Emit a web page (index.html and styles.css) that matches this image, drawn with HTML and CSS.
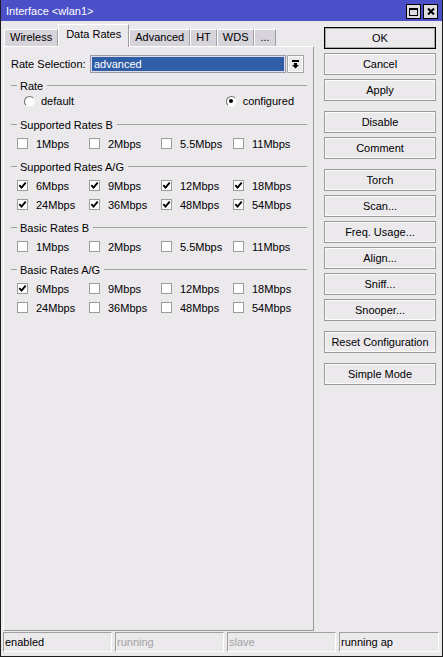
FILE: index.html
```html
<!DOCTYPE html>
<html>
<head>
<meta charset="utf-8">
<title>Interface &lt;wlan1&gt;</title>
<link rel="stylesheet" href="styles.css">
</head>
<body>
<div class="window">
  <div class="titlebar">
    <span class="title">Interface &lt;wlan1&gt;</span>
    <div class="title-btns">
      <span class="tbtn"><svg width="9" height="8" viewBox="0 0 9 8"><rect x="0" y="0" width="9" height="2" fill="#000"/><rect x="0.5" y="0.5" width="8" height="7" fill="none" stroke="#000"/></svg></span>
      <span class="tbtn"><svg width="8" height="7" viewBox="0 0 8 7"><path d="M1 0.5 L7 6.5 M7 0.5 L1 6.5" stroke="#000" stroke-width="2" fill="none"/></svg></span>
    </div>
  </div>
  <div class="main">
    <div class="left">
      <div class="tabs">
        <div class="tab">Wireless</div>
        <div class="tab active">Data Rates</div>
        <div class="tab">Advanced</div>
        <div class="tab">HT</div>
        <div class="tab">WDS</div>
        <div class="tab">...</div>
      </div>
      <div class="panel">
        <div class="sel-row">
          <span class="sel-label">Rate Selection:</span>
          <span class="combo">advanced</span>
          <span class="drop"><svg width="7" height="9" viewBox="0 0 7 9"><rect x="0" y="0" width="7" height="2" fill="#000"/><rect x="2" y="3" width="3" height="2" fill="#000"/><polygon points="0,5 7,5 3.5,8.5" fill="#000"/></svg></span>
        </div>

        <div class="group group-rate">
          <div class="ghead"><span class="dash"></span><span class="glabel">Rate</span><span class="gline"></span></div>
          <div class="radio-row">
            <span class="ritem"><span class="radio"></span>default</span>
            <span class="ritem ritem-right"><span class="radio on"></span>configured</span>
          </div>
        </div>

        <div class="group">
          <div class="ghead"><span class="dash"></span><span class="glabel">Supported Rates B</span><span class="gline"></span></div>
          <div class="row">
            <span class="cell"><span class="cb"></span>1Mbps</span>
            <span class="cell"><span class="cb"></span>2Mbps</span>
            <span class="cell"><span class="cb"></span>5.5Mbps</span>
            <span class="cell"><span class="cb"></span>11Mbps</span>
          </div>
        </div>

        <div class="group">
          <div class="ghead"><span class="dash"></span><span class="glabel">Supported Rates A/G</span><span class="gline"></span></div>
          <div class="row">
            <span class="cell"><span class="cb"><svg class="tick" viewBox="0 0 9 9"><path d="M1.3 4.2 L3.5 6.6 L7.7 1.6" /></svg></span>6Mbps</span>
            <span class="cell"><span class="cb"><svg class="tick" viewBox="0 0 9 9"><path d="M1.3 4.2 L3.5 6.6 L7.7 1.6" /></svg></span>9Mbps</span>
            <span class="cell"><span class="cb"><svg class="tick" viewBox="0 0 9 9"><path d="M1.3 4.2 L3.5 6.6 L7.7 1.6" /></svg></span>12Mbps</span>
            <span class="cell"><span class="cb"><svg class="tick" viewBox="0 0 9 9"><path d="M1.3 4.2 L3.5 6.6 L7.7 1.6" /></svg></span>18Mbps</span>
          </div>
          <div class="row">
            <span class="cell"><span class="cb"><svg class="tick" viewBox="0 0 9 9"><path d="M1.3 4.2 L3.5 6.6 L7.7 1.6" /></svg></span>24Mbps</span>
            <span class="cell"><span class="cb"><svg class="tick" viewBox="0 0 9 9"><path d="M1.3 4.2 L3.5 6.6 L7.7 1.6" /></svg></span>36Mbps</span>
            <span class="cell"><span class="cb"><svg class="tick" viewBox="0 0 9 9"><path d="M1.3 4.2 L3.5 6.6 L7.7 1.6" /></svg></span>48Mbps</span>
            <span class="cell"><span class="cb"><svg class="tick" viewBox="0 0 9 9"><path d="M1.3 4.2 L3.5 6.6 L7.7 1.6" /></svg></span>54Mbps</span>
          </div>
        </div>

        <div class="group">
          <div class="ghead"><span class="dash"></span><span class="glabel">Basic Rates B</span><span class="gline"></span></div>
          <div class="row">
            <span class="cell"><span class="cb"></span>1Mbps</span>
            <span class="cell"><span class="cb"></span>2Mbps</span>
            <span class="cell"><span class="cb"></span>5.5Mbps</span>
            <span class="cell"><span class="cb"></span>11Mbps</span>
          </div>
        </div>

        <div class="group">
          <div class="ghead"><span class="dash"></span><span class="glabel">Basic Rates A/G</span><span class="gline"></span></div>
          <div class="row">
            <span class="cell"><span class="cb"><svg class="tick" viewBox="0 0 9 9"><path d="M1.3 4.2 L3.5 6.6 L7.7 1.6" /></svg></span>6Mbps</span>
            <span class="cell"><span class="cb"></span>9Mbps</span>
            <span class="cell"><span class="cb"></span>12Mbps</span>
            <span class="cell"><span class="cb"></span>18Mbps</span>
          </div>
          <div class="row">
            <span class="cell"><span class="cb"></span>24Mbps</span>
            <span class="cell"><span class="cb"></span>36Mbps</span>
            <span class="cell"><span class="cb"></span>48Mbps</span>
            <span class="cell"><span class="cb"></span>54Mbps</span>
          </div>
        </div>
      </div>
    </div>
    <div class="right">
      <div class="btn default">OK</div>
      <div class="btn">Cancel</div>
      <div class="btn">Apply</div>
      <div class="btn sep">Disable</div>
      <div class="btn">Comment</div>
      <div class="btn sep">Torch</div>
      <div class="btn">Scan...</div>
      <div class="btn">Freq. Usage...</div>
      <div class="btn">Align...</div>
      <div class="btn">Sniff...</div>
      <div class="btn">Snooper...</div>
      <div class="btn sep">Reset Configuration</div>
      <div class="btn sep">Simple Mode</div>
    </div>
  </div>
  <div class="status">
    <span class="scell">enabled</span>
    <span class="scell dim">running</span>
    <span class="scell dim">slave</span>
    <span class="scell last">running ap</span>
  </div>
</div>
</body>
</html>
```

FILE: styles.css
```css
html, body {
  margin: 0;
  padding: 0;
  background: #ece9ed;
}

body {
  font-family: "Liberation Sans", Arial, sans-serif;
  font-size: 11px;
  color: #000;
}

.window {
  width: 443px;
  height: 657px;
  box-sizing: border-box;
  border: 1px solid #1c1c1c;
  border-top: 0;
  display: flex;
  flex-direction: column;
  background: #ece9ed;
}

.titlebar {
  height: 21px;
  flex: none;
  background: #4b4fc8;
  color: #fff;
  display: flex;
  align-items: center;
  padding: 0 4px 0 5px;
}

.title {
  font-size: 11px;
}

.title-btns {
  margin-left: auto;
  display: flex;
  gap: 2px;
  margin-top: 2px;
}

.tbtn {
  width: 15px;
  height: 15px;
  box-sizing: border-box;
  border: 1px solid #000;
  background: #dedde2;
  display: flex;
  align-items: center;
  justify-content: center;
}

.main {
  flex: 1;
  display: flex;
  padding-left: 2px;
  min-height: 0;
}

.left {
  width: 311px;
  display: flex;
  flex-direction: column;
}

.tabs {
  height: 25px;
  flex: none;
  display: flex;
  align-items: flex-end;
  padding-left: 1px;
}

.tab {
  height: 17px;
  box-sizing: border-box;
  padding: 0 5px;
  line-height: 15px;
  background: #d6d3da;
  border-left: 1px solid #fff;
  border-top: 1px solid #fff;
  border-right: 1px solid #a0a0a0;
  white-space: nowrap;
}

.tab.active {
  height: 23px;
  margin-bottom: -1px;
  padding: 0 7px;
  line-height: 19px;
  background: #ece9ed;
  position: relative;
  z-index: 1;
}

.panel {
  flex: 1;
  border: 1px solid;
  border-color: #fff #9a9a9a #9a9a9a #fff;
  padding: 8px 6px 0 7px;
}

.sel-row {
  display: flex;
  align-items: center;
  height: 18px;
  margin-bottom: 3px;
}

.sel-label {
  width: 79px;
}

.combo {
  width: 196px;
  height: 18px;
  box-sizing: border-box;
  border: 1px solid #9a9aa8;
  box-shadow: inset 0 0 0 1px #dcdcec;
  background: #2f5da6;
  color: #fff;
  padding-left: 3px;
  line-height: 16px;
}

.drop {
  width: 17px;
  height: 18px;
  box-sizing: border-box;
  margin-left: 1px;
  border: 1px solid #a4a4a4;
  box-shadow: inset 0 0 0 1px #fafafa;
  display: flex;
  align-items: center;
  justify-content: center;
}

.ghead {
  display: flex;
  align-items: center;
  height: 19px;
}

.dash {
  width: 6px;
  border-top: 1px solid #a0a0a0;
  margin-right: 3px;
}

.gline {
  flex: 1;
  border-top: 1px solid #a0a0a0;
  margin-left: 4px;
}

.group + .group {
  margin-top: 4px;
}

.group-rate {
  padding-bottom: 4px;
}

.radio-row {
  height: 12px;
  display: flex;
  align-items: center;
  padding-left: 13px;
}

.ritem {
  display: flex;
  align-items: center;
}

.ritem-right {
  margin-left: auto;
  margin-right: 13px;
}

.radio {
  width: 11px;
  height: 11px;
  box-sizing: border-box;
  border-radius: 50%;
  border: 1px solid;
  border-color: #6e6e6e #f4f4f4 #f4f4f4 #6e6e6e;
  background: #fff;
  margin-right: 6px;
  display: flex;
  align-items: center;
  justify-content: center;
}

.radio.on::after {
  content: "";
  width: 4px;
  height: 4px;
  border-radius: 50%;
  background: #000;
}

.row {
  display: flex;
  align-items: center;
  height: 19px;
  padding-left: 6px;
}

.cell {
  width: 72px;
  display: flex;
  align-items: center;
}

.cb {
  width: 11px;
  height: 11px;
  box-sizing: border-box;
  border: 1px solid #9c9c9c;
  background: #fff;
  margin-right: 8px;
  display: flex;
  align-items: center;
  justify-content: center;
}

.tick {
  width: 9px;
  height: 9px;
}

.tick path {
  fill: none;
  stroke: #000;
  stroke-width: 1.9;
}

.right {
  width: 112px;
  margin-left: 10px;
  padding-top: 6px;
  display: flex;
  flex-direction: column;
}

.btn {
  height: 22px;
  box-sizing: border-box;
  border: 1px solid #9a9a9a;
  box-shadow: inset 0 0 0 1px #fbfbfb;
  background: #ece9ed;
  display: flex;
  align-items: center;
  justify-content: center;
  white-space: nowrap;
}

.btn + .btn {
  margin-top: 4px;
}

.btn.sep {
  margin-top: 10px;
}

.btn.default {
  border-color: #000;
  box-shadow: inset 0 0 0 1px #a8a8a8;
}

.status {
  flex: none;
  display: flex;
  gap: 3px;
  margin-top: 1px;
  padding: 0 3px 4px 2px;
}

.scell {
  width: 109px;
  height: 20px;
  box-sizing: border-box;
  border: 1px solid;
  border-color: #a0a0a0 #fff #fff #a0a0a0;
  padding-left: 1px;
  line-height: 18px;
  white-space: nowrap;
}

.scell.last {
  flex: 1;
  width: auto;
}

.scell.dim {
  color: #a3a3a3;
}
```
